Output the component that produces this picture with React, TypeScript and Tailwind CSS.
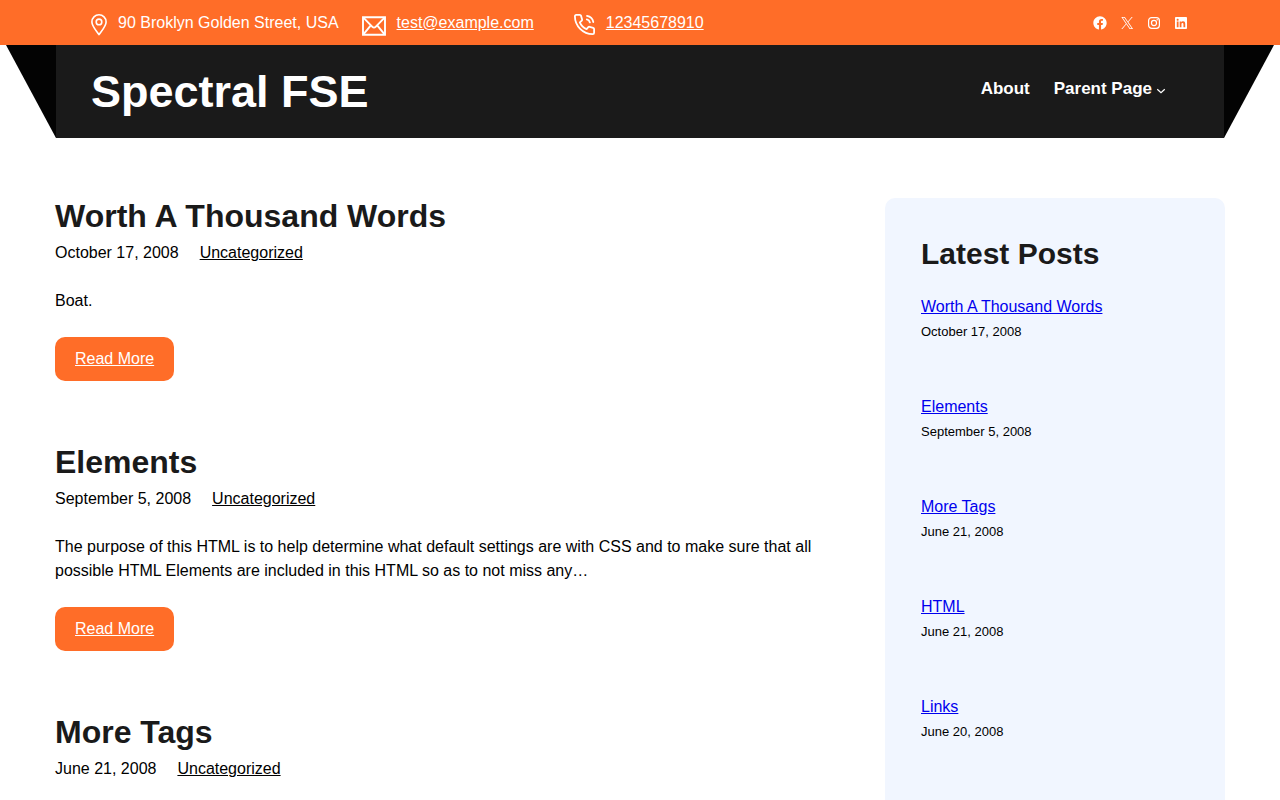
import type { ReactNode } from "react";

interface Post {
  title: string;
  date: string;
  excerpt?: string;
}

const posts: Post[] = [
  { title: "Worth A Thousand Words", date: "October 17, 2008", excerpt: "Boat." },
  {
    title: "Elements",
    date: "September 5, 2008",
    excerpt:
      "The purpose of this HTML is to help determine what default settings are with CSS and to make sure that all possible HTML Elements are included in this HTML so as to not miss any…",
  },
  { title: "More Tags", date: "June 21, 2008" },
];

const latestPosts: Post[] = [
  { title: "Worth A Thousand Words", date: "October 17, 2008" },
  { title: "Elements", date: "September 5, 2008" },
  { title: "More Tags", date: "June 21, 2008" },
  { title: "HTML", date: "June 21, 2008" },
  { title: "Links", date: "June 20, 2008" },
];

const socialLinks: { name: string; icon: ReactNode }[] = [
  {
    name: "Facebook",
    icon: (
      <path d="M12 2C6.5 2 2 6.5 2 12c0 5 3.7 9.1 8.4 9.9v-7H7.9V12h2.5V9.8c0-2.5 1.5-3.9 3.8-3.9 1.1 0 2.2.2 2.2.2v2.5h-1.3c-1.2 0-1.6.8-1.6 1.6V12h2.8l-.4 2.9h-2.3v7C18.3 21.1 22 17 22 12c0-5.5-4.5-10-10-10z" />
    ),
  },
  {
    name: "X",
    icon: (
      <path d="M13.982 10.622 20.54 3h-1.554l-5.693 6.618L8.745 3H3.5l6.876 10.007L3.5 21h1.554l6.012-6.989L15.868 21h5.245l-7.131-10.378Zm-2.128 2.474-.697-.997-5.543-7.93H8l4.474 6.4.697.996 5.815 8.318h-2.387l-4.745-6.787Z" />
    ),
  },
  {
    name: "Instagram",
    icon: (
      <>
        <rect x="3.9" y="3.9" width="16.2" height="16.2" rx="4.6" fill="none" stroke="currentColor" strokeWidth="1.8" />
        <circle cx="12" cy="12" r="3.8" fill="none" stroke="currentColor" strokeWidth="1.8" />
        <circle cx="16.8" cy="7.2" r="1.1" />
      </>
    ),
  },
  {
    name: "LinkedIn",
    icon: (
      <path d="M19.7,3H4.3C3.582,3,3,3.582,3,4.3v15.4C3,20.418,3.582,21,4.3,21h15.4c0.718,0,1.3-0.582,1.3-1.3V4.3C21,3.582,20.418,3,19.7,3z M8.339,18.338H5.667v-8.59h2.672V18.338z M7.004,8.574c-0.857,0-1.549-0.694-1.549-1.548c0-0.855,0.691-1.548,1.549-1.548c0.854,0,1.547,0.694,1.547,1.548C8.551,7.881,7.858,8.574,7.004,8.574z M18.339,18.338h-2.669v-4.177c0-0.996-0.017-2.278-1.387-2.278c-1.389,0-1.601,1.086-1.601,2.206v4.249h-2.667v-8.59h2.559v1.174h0.037c0.356-0.675,1.227-1.387,2.526-1.387c2.703,0,3.203,1.779,3.203,4.092V18.338z" />
    ),
  },
];

function TopBar() {
  return (
    <div className="bg-[#ff6d28] text-white">
      <div className="mx-auto flex h-[45px] w-full max-w-[1168px] items-center justify-between px-[35px]">
        <address className="flex items-center not-italic">
          <div className="mr-[23px] flex items-center gap-[11px]">
            <svg className="mt-1 h-[22px] w-4" viewBox="0 0 16 22" fill="none" stroke="currentColor" strokeWidth="1.6">
              <path d="M8 20.6C6.2 17.8 0.9 12.2 0.9 7.9a7.1 7.1 0 0 1 14.2 0C15.1 12.2 9.8 17.8 8 20.6z" strokeLinejoin="round" />
              <circle cx="8" cy="7.9" r="2.8" />
            </svg>
            <span>90 Broklyn Golden Street, USA</span>
          </div>
          <div className="mr-10 flex items-center gap-[11px]">
            <svg className="mt-[6px] h-5 w-6" viewBox="0 0 24 20" fill="none" stroke="currentColor" strokeWidth="1.9">
              <path d="M1 1.2h22v17.6H1z" />
              <path d="M1.4 1.6l9 9.3c1 1 2.2 1 3.2 0l9-9.3M1.4 18.4l7.4-9M22.6 18.4l-7.4-9" />
            </svg>
            <a href="mailto:test@example.com" className="underline">
              test@example.com
            </a>
          </div>
          <div className="flex items-center gap-[11px]">
            <svg className="mt-1 h-[21px] w-[21px]" viewBox="0 0 21 21" fill="none" stroke="currentColor" strokeWidth="1.8" strokeLinecap="round" strokeLinejoin="round">
              <path d="M2.2 0.9h3.6c.6 0 1.1.4 1.3 1l1 3.6c.1.5 0 1-.4 1.3L5.8 8.4c1.3 3.1 3.7 5.5 6.8 6.8l1.7-2c.3-.4.8-.5 1.3-.4l3.6 1.1c.6.2.9.7.9 1.2v3.6c0 .8-.6 1.4-1.4 1.4C9 20.1.9 12 .9 2.3c0-.8.5-1.4 1.3-1.4z" />
              <path d="M13 1.9c3.2.6 5.7 3 6.3 6.1M12.8 5.4c1.6.4 2.7 1.5 3.1 3" />
            </svg>
            <a href="tel:12345678910" className="underline">
              12345678910
            </a>
          </div>
        </address>
        <div className="flex gap-[11px]">
          {socialLinks.map((link) => (
            <a key={link.name} href="#" aria-label={link.name}>
              <svg className="h-4 w-4" viewBox="0 0 24 24" fill="currentColor">
                {link.icon}
              </svg>
            </a>
          ))}
        </div>
      </div>
    </div>
  );
}

function Header() {
  return (
    <header className="mx-auto flex w-full max-w-[1268px] text-white">
      <div className="w-[50px] shrink-0 bg-[#030303] [clip-path:polygon(0_0,100%_0,100%_100%)]"></div>
      <div className="flex h-[93px] flex-1 items-center justify-between bg-[#1a1a1a] pr-[58px] pl-[35px]">
        <h1 className="text-[45px] leading-[54px] font-bold">
          <a href="#">Spectral FSE</a>
        </h1>
        <nav className="flex gap-6 pb-[6px] text-[17px] leading-6 font-bold">
          <a href="#">About</a>
          <a href="#" className="flex items-center gap-1">
            Parent Page
            <svg className="mt-1 h-[10px] w-[10px]" viewBox="0 0 12 12" fill="none" stroke="currentColor" strokeWidth="1.5">
              <path d="M1.5 4L6 8l4.5-4" />
            </svg>
          </a>
        </nav>
      </div>
      <div className="w-[50px] shrink-0 bg-[#030303] [clip-path:polygon(0_0,100%_0,0_100%)]"></div>
    </header>
  );
}

function PostEntry({ post }: { post: Post }) {
  return (
    <article>
      <h2 className="text-[32px] leading-9 font-bold text-[#1a1a1a]">{post.title}</h2>
      <div className="mt-[7px] flex gap-[21px] leading-6">
        <time>{post.date}</time>
        <a href="#" className="underline">
          Uncategorized
        </a>
      </div>
      {post.excerpt && (
        <>
          <p className="mt-6 leading-6">{post.excerpt}</p>
          <a href="#" className="mt-6 inline-block rounded-[10px] bg-[#ff6d28] px-5 py-[10px] align-top leading-6 text-white underline">
            Read More
          </a>
        </>
      )}
    </article>
  );
}

export default function App() {
  return (
    <div className="flex min-h-screen flex-col bg-white font-['Liberation_Sans',Arial,sans-serif] text-base text-black">
      <TopBar />
      <Header />
      <div className="mx-auto flex w-full max-w-[1170px] flex-1 gap-[60px] pt-[60px]">
        <main className="flex flex-1 flex-col gap-[63px]">
          {posts.map((post) => (
            <PostEntry key={post.title} post={post} />
          ))}
        </main>
        <aside className="w-[340px] shrink-0 rounded-t-[10px] bg-[#f1f6ff] px-9 pt-9">
          <h2 className="text-[30px] leading-10 font-bold text-[#1a1a1a]">Latest Posts</h2>
          <ul className="mt-[21px]">
            {latestPosts.map((post) => (
              <li key={post.title} className="h-[100px] last:h-auto">
                <a href="#" className="block leading-6 text-[#0000ee] underline">
                  {post.title}
                </a>
                <time className="mt-[3px] block text-[13px] leading-5">{post.date}</time>
              </li>
            ))}
          </ul>
        </aside>
      </div>
    </div>
  );
}
